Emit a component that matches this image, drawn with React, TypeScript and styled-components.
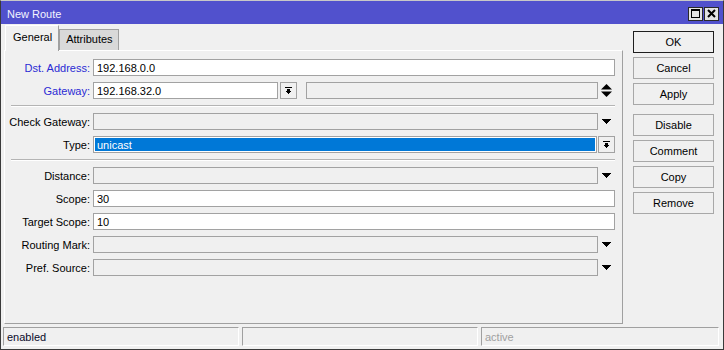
import React from 'react';
import styled, { createGlobalStyle } from 'styled-components';

const GlobalStyle = createGlobalStyle`
  * { box-sizing: border-box; }
  body {
    margin: 0;
    background: #f0f0f0;
    font-family: "Liberation Sans", Arial, sans-serif;
    font-size: 11px;
  }
`;

const Window = styled.div`
  width: 724px;
  height: 350px;
  display: flex;
  flex-direction: column;
  background: #f0f0f0;
  border: 1px solid #3a3a3a;
  border-top-color: #c8c8c8;
`;

const TitleBar = styled.div`
  height: 23px;
  flex: 0 0 23px;
  display: flex;
  align-items: center;
  padding: 2px 4px 0 6px;
  background: #5151cd;
  color: #f4f4ff;
  font-size: 11px;
`;

const TitleText = styled.div`
  flex: 1;
`;

const TitleButton = styled.div`
  width: 15px;
  height: 14px;
  margin-left: 1px;
  display: flex;
  align-items: center;
  justify-content: center;
  background: #e4e4e4;
  border: 1px solid #2a2a2a;
`;

const Body = styled.div`
  flex: 1;
  display: flex;
  min-height: 0;
`;

const Main = styled.div`
  flex: 1;
  display: flex;
  flex-direction: column;
  padding: 1px 0 1px 3px;
`;

const TabStrip = styled.div`
  height: 25px;
  flex: 0 0 25px;
  display: flex;
  align-items: flex-end;
  padding-left: 1px;
`;

interface TabProps { active?: boolean };
const Tab = styled.div<TabProps>`
  position: relative;
  z-index: ${p => p.active ? 2 : 1};
  height: ${p => p.active ? '26px' : '21px'};
  margin-bottom: ${p => p.active ? '-1px' : '0'};
  padding: ${p => p.active ? '5px 6px 0 7px' : '3px 5px 0 6px'};
  background: ${p => p.active ? '#f0f0f0' : '#d9d9d9'};
  border: 1px solid #a0a0a0;
  border-bottom: none;
  border-top-color: ${p => p.active ? '#ffffff' : '#a0a0a0'};
  border-left-color: ${p => p.active ? '#ffffff' : '#a0a0a0'};
  color: #000;
`;

const Panel = styled.div`
  flex: 1;
  display: flex;
  flex-direction: column;
  gap: 6px;
  padding: 8px 7px 0 0;
  border: 1px solid;
  border-color: #ffffff #a0a0a0 #a0a0a0 #ffffff;
`;

const Row = styled.div`
  display: flex;
  align-items: center;
  height: 17px;
`;

interface LabelProps { accent?: boolean };
const Label = styled.div<LabelProps>`
  width: 85px;
  flex: 0 0 85px;
  margin-right: 3px;
  text-align: right;
  white-space: nowrap;
  color: ${p => p.accent ? '#2a2ad4' : '#000'};
`;

interface FieldProps { disabled?: boolean; selected?: boolean; width?: number };
const Field = styled.div<FieldProps>`
  height: 17px;
  flex: ${p => p.width ? `0 0 ${p.width}px` : '1'};
  padding: 1px 3px 0;
  line-height: 14px;
  border: 1px solid #a2a2a2;
  white-space: nowrap;
  overflow: hidden;
  background: ${p => p.selected ? '#0078d7' : p.disabled ? '#f0f0f0' : '#ffffff'};
  color: ${p => p.selected ? '#ffffff' : '#000'};
  box-shadow: ${p => p.selected ? 'inset 0 0 0 1px #ffffff' : 'none'};
`;

const Trailing = styled.div`
  width: 17px;
  flex: 0 0 17px;
  height: 17px;
  display: flex;
  align-items: center;
  justify-content: center;
`;

interface DropButtonProps { gap?: number };
const DropButton = styled.div<DropButtonProps>`
  width: 17px;
  height: 17px;
  flex: 0 0 17px;
  margin-left: ${p => p.gap ?? 2}px;
  display: flex;
  align-items: center;
  justify-content: center;
  background: #f0f0f0;
  border: 1px solid #a2a2a2;
`;

const Spacer = styled.div`
  width: 9px;
  flex: 0 0 9px;
`;

const Separator = styled.div`
  height: 2px;
  margin: 0 0 0 6px;
  border-top: 1px solid #b4b4b4;
  border-bottom: 1px solid #ffffff;
`;

const Side = styled.div`
  width: 81px;
  flex: 0 0 81px;
  margin: 0 9px 0 10px;
  padding-top: 7px;
  display: flex;
  flex-direction: column;
  gap: 4px;
`;

interface ButtonProps { primary?: boolean; spaced?: boolean };
const Button = styled.div<ButtonProps>`
  height: 22px;
  display: flex;
  align-items: center;
  justify-content: center;
  margin-top: ${p => p.spaced ? '5px' : '0'};
  background: #f0f0f0;
  border: 1px solid ${p => p.primary ? '#1e1e1e' : '#a8a8a8'};
  color: #000;
`;

const StatusBar = styled.div`
  height: 24px;
  flex: 0 0 24px;
  display: grid;
  grid-template-columns: 236px 236px 1fr;
  gap: 3px;
  padding: 2px 4px 3px 2px;
`;

interface CellProps { muted?: boolean };
const Cell = styled.div<CellProps>`
  padding: 3px 3px 0;
  border: 1px solid;
  border-color: #a0a0a0 #ffffff #ffffff #a0a0a0;
  color: ${p => p.muted ? '#a0a0a0' : '#0a0a2a'};
  white-space: nowrap;
`;

const ArrowDown = () => (
  <svg width="9" height="5" viewBox="0 0 9 5" shapeRendering="crispEdges">
    <polygon points="0,0 9,0 4.5,5" fill="#000" />
  </svg>
);

const UpDown = () => (
  <svg width="11" height="13" viewBox="0 0 11 13">
    <polygon points="5.5,0 11,5.5 0,5.5" fill="#000" />
    <polygon points="0,7.5 11,7.5 5.5,13" fill="#000" />
  </svg>
);

const DropIcon = () => (
  <svg width="7" height="7" viewBox="0 0 7 7" shapeRendering="crispEdges">
    <rect x="0" y="0" width="7" height="1" fill="#000" />
    <rect x="2" y="2" width="3" height="2" fill="#000" />
    <polygon points="0,4 7,4 3.5,7" fill="#000" />
  </svg>
);

const MaxIcon = () => (
  <svg width="9" height="9" viewBox="0 0 9 9" shapeRendering="crispEdges">
    <rect x="0.5" y="0.5" width="8" height="8" fill="none" stroke="#000" />
    <rect x="0" y="0" width="9" height="2" fill="#000" />
  </svg>
);

const CloseIcon = () => (
  <svg width="9" height="9" viewBox="0 0 9 9">
    <path d="M1 1 L8 8 M8 1 L1 8" stroke="#000" strokeWidth="2" />
  </svg>
);

interface FieldRowProps { label: string; value?: string; disabled?: boolean; combo?: boolean };
const FieldRow = ({ label, value = '', disabled, combo }: FieldRowProps) => (
  <Row>
    <Label>{label}</Label>
    <Field disabled={disabled}>{value}</Field>
    {combo && <Trailing><ArrowDown /></Trailing>}
  </Row>
);

const App = () => (
  <>
    <GlobalStyle />
    <Window>
      <TitleBar>
        <TitleText>New Route</TitleText>
        <TitleButton><MaxIcon /></TitleButton>
        <TitleButton><CloseIcon /></TitleButton>
      </TitleBar>

      <Body>
        <Main>
          <TabStrip>
            <Tab active>General</Tab>
            <Tab>Attributes</Tab>
          </TabStrip>
          <Panel>
            <Row>
              <Label accent>Dst. Address:</Label>
              <Field>192.168.0.0</Field>
            </Row>
            <Row>
              <Label accent>Gateway:</Label>
              <Field width={185}>192.168.32.0</Field>
              <DropButton><DropIcon /></DropButton>
              <Spacer />
              <Field disabled />
              <Trailing><UpDown /></Trailing>
            </Row>
            <Separator />
            <FieldRow label="Check Gateway:" disabled combo />
            <Row>
              <Label>Type:</Label>
              <Field selected>unicast</Field>
              <DropButton gap={1}><DropIcon /></DropButton>
            </Row>
            <Separator />
            <FieldRow label="Distance:" disabled combo />
            <FieldRow label="Scope:" value="30" />
            <FieldRow label="Target Scope:" value="10" />
            <FieldRow label="Routing Mark:" disabled combo />
            <FieldRow label="Pref. Source:" disabled combo />
          </Panel>
        </Main>

        <Side>
          <Button primary>OK</Button>
          <Button>Cancel</Button>
          <Button>Apply</Button>
          <Button spaced>Disable</Button>
          <Button>Comment</Button>
          <Button>Copy</Button>
          <Button>Remove</Button>
        </Side>
      </Body>

      <StatusBar>
        <Cell>enabled</Cell>
        <Cell />
        <Cell muted>active</Cell>
      </StatusBar>
    </Window>
  </>
);

export default App;
